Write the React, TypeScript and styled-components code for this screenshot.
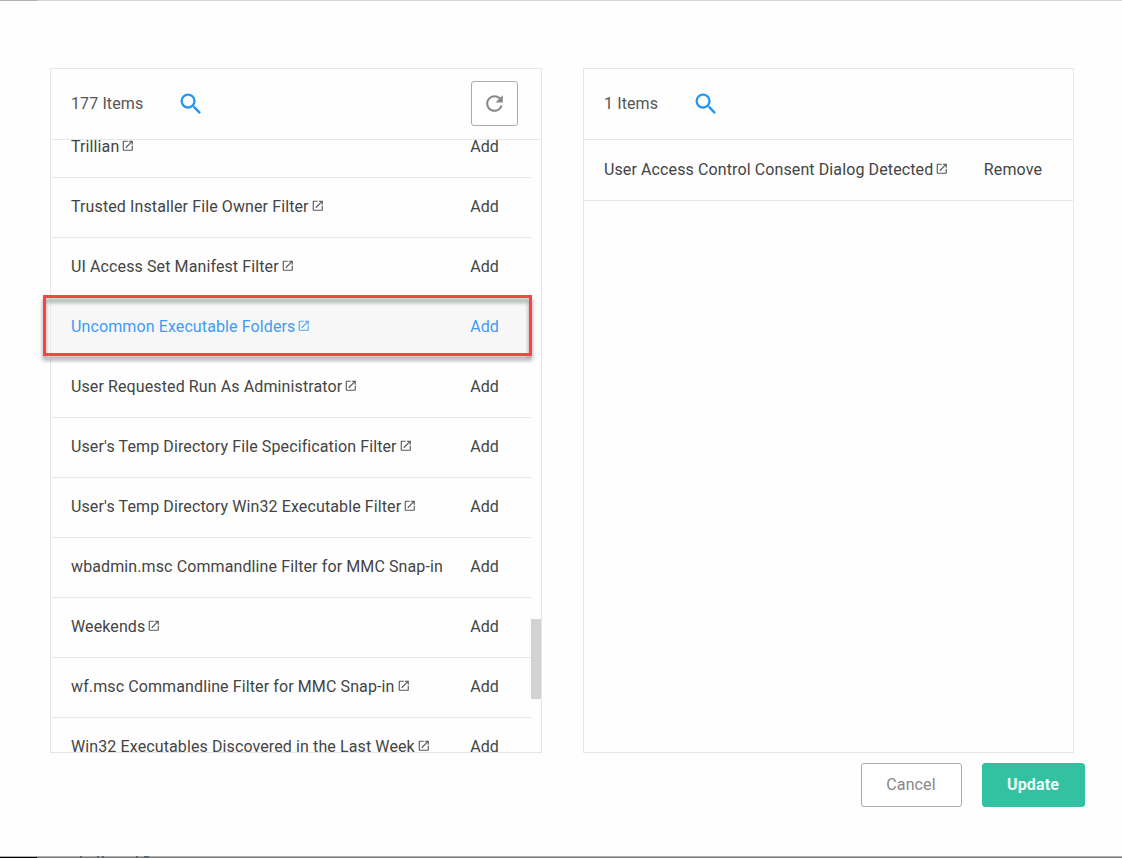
import React from 'react';
import styled, { createGlobalStyle, css } from 'styled-components';
import { MdSearch, MdRefresh, MdOpenInNew } from 'react-icons/md';

const GlobalStyle = createGlobalStyle`
  * { box-sizing: border-box; }
  body { margin: 0; background: #fff; overflow: hidden; }
  button { font: inherit; letter-spacing: inherit; cursor: pointer; }
`;

const Page = styled.main`
  position: relative;
  width: 1122px;
  height: 858px;
  display: flex;
  flex-direction: column;
  overflow: hidden;
  background: #fefefe;
  color: #444;
  font: 400 16px/20px Roboto, sans-serif;
  letter-spacing: 0.11px;
`;

const TopEdge = styled.div`
  flex: none;
  height: 1px;
  background: linear-gradient(90deg, #b0b0b0 37px, #d6d6d6 37px);
`;

const BottomEdge = styled.div`
  flex: none;
  height: 2px;
  margin-top: auto;
  background:
    linear-gradient(90deg, #000 37px, transparent 37px) 0 1px no-repeat,
    linear-gradient(#55697d, #55697d) 80px 0 / 2px 2px no-repeat,
    linear-gradient(#55697d, #55697d) 97px 0 / 2px 2px no-repeat,
    linear-gradient(#55697d, #55697d) 102px 0 / 2px 2px no-repeat,
    linear-gradient(#55697d, #55697d) 136px 0 / 2px 2px no-repeat,
    linear-gradient(#55697d, #55697d) 144px 0 / 5px 2px no-repeat,
    linear-gradient(#b0b0b0 1px, #777 1px);
`;

const Panels = styled.div`
  display: flex;
  gap: 41px;
  padding: 67px 0 0 50px;
`;

const Panel = styled.section<{ $width: number }>`
  width: ${p => p.$width}px;
  height: 685px;
  display: flex;
  flex-direction: column;
  border: 1px solid #e6e8e8;
`;

const PanelHeader = styled.header`
  flex: none;
  height: 71px;
  display: flex;
  align-items: center;
  padding: 0 23px 1px 20px;
  border-bottom: 1px solid #e6e8e8;
`;

const Count = styled.span`
  color: #555;
  margin-right: 33.5px;
`;

const SearchButton = styled.button`
  display: flex;
  padding: 0;
  border: 0;
  background: none;
  color: #2196f3;
`;

const RefreshButton = styled.button`
  width: 47px;
  height: 45px;
  margin-left: auto;
  display: flex;
  align-items: center;
  justify-content: center;
  padding: 0;
  border: 1px solid #a5acb3;
  border-radius: 3px;
  background: #fff;
  color: #888;
`;

const ListArea = styled.div`
  flex: 1;
  min-height: 0;
  display: flex;
  overflow: hidden;
`;

const List = styled.ul<{ $offset?: number }>`
  flex: 1;
  margin: ${p => -(p.$offset || 0)}px 0 0;
  padding: 0;
  list-style: none;
`;

const Row = styled.li<{ $active?: boolean; $tall?: boolean }>`
  height: ${p => (p.$tall ? 61 : 60)}px;
  display: flex;
  align-items: center;
  padding: ${p => (p.$tall ? '0 31px 0 20px' : '0 32px 1px 20px')};
  border-bottom: 1px solid #e4e8e8;
  ${p => p.$active && css`
    background: #f7f7f7;
    color: #3f9bf5;
  `}
`;

const Name = styled.span`
  display: flex;
  align-items: center;
  white-space: nowrap;
`;

const LinkIcon = styled(MdOpenInNew)`
  flex: none;
  width: 13.5px;
  height: 13.5px;
  margin: 0 0 2.5px 2px;
  opacity: 0.9;
`;

const Action = styled.span`
  margin-left: auto;
`;

const Scrollbar = styled.div`
  width: 10px;
  padding-top: 479px;
`;

const Thumb = styled.div`
  height: 80px;
  background: #d2d2d2;
`;

const Callout = styled.div`
  position: absolute;
  left: 43px;
  top: 295px;
  width: 489px;
  height: 61px;
  border: 3px solid #fa4343;
  filter: drop-shadow(0 4px 2px rgba(0, 0, 0, 0.42));
`;

const Footer = styled.footer`
  display: flex;
  justify-content: flex-end;
  gap: 20px;
  padding: 10px 37px 0 0;
`;

const FooterButton = styled.button<{ $primary?: boolean }>`
  width: ${p => (p.$primary ? 103 : 101)}px;
  height: 44px;
  padding: 0 1px 0 0;
  border: 1px solid ${p => (p.$primary ? '#32c2a2' : '#a5acb3')};
  border-radius: 3px;
  background: ${p => (p.$primary ? '#32c2a2' : '#fff')};
  color: ${p => (p.$primary ? '#eefaf7' : '#888')};
  font-weight: ${p => (p.$primary ? 700 : 400)};
`;

const items = [
  { name: 'Trillian' },
  { name: 'Trusted Installer File Owner Filter' },
  { name: 'UI Access Set Manifest Filter' },
  { name: 'Uncommon Executable Folders', active: true },
  { name: 'User Requested Run As Administrator' },
  { name: "User's Temp Directory File Specification Filter" },
  { name: "User's Temp Directory Win32 Executable Filter" },
  { name: 'wbadmin.msc Commandline Filter for MMC Snap-in', noLink: true },
  { name: 'Weekends' },
  { name: 'wf.msc Commandline Filter for MMC Snap-in' },
  { name: 'Win32 Executables Discovered in the Last Week' },
];

export default function App() {
  return (
    <Page>
      <GlobalStyle />
      <TopEdge />
      <Panels>
        <Panel $width={492}>
          <PanelHeader>
            <Count>177 Items</Count>
            <SearchButton aria-label="Search"><MdSearch size={28} /></SearchButton>
            <RefreshButton aria-label="Refresh"><MdRefresh size={25} /></RefreshButton>
          </PanelHeader>
          <ListArea>
            <List $offset={22}>
              {items.map(i => (
                <Row key={i.name} $active={i.active}>
                  <Name>{i.name}{!i.noLink && <LinkIcon />}</Name>
                  <Action>Add</Action>
                </Row>
              ))}
            </List>
            <Scrollbar><Thumb /></Scrollbar>
          </ListArea>
        </Panel>
        <Panel $width={491}>
          <PanelHeader>
            <Count>1 Items</Count>
            <SearchButton aria-label="Search"><MdSearch size={28} /></SearchButton>
          </PanelHeader>
          <ListArea>
            <List>
              <Row $tall>
                <Name>User Access Control Consent Dialog Detected<LinkIcon /></Name>
                <Action>Remove</Action>
              </Row>
            </List>
          </ListArea>
        </Panel>
      </Panels>
      <Footer>
        <FooterButton>Cancel</FooterButton>
        <FooterButton $primary>Update</FooterButton>
      </Footer>
      <BottomEdge />
      <Callout />
    </Page>
  );
}
